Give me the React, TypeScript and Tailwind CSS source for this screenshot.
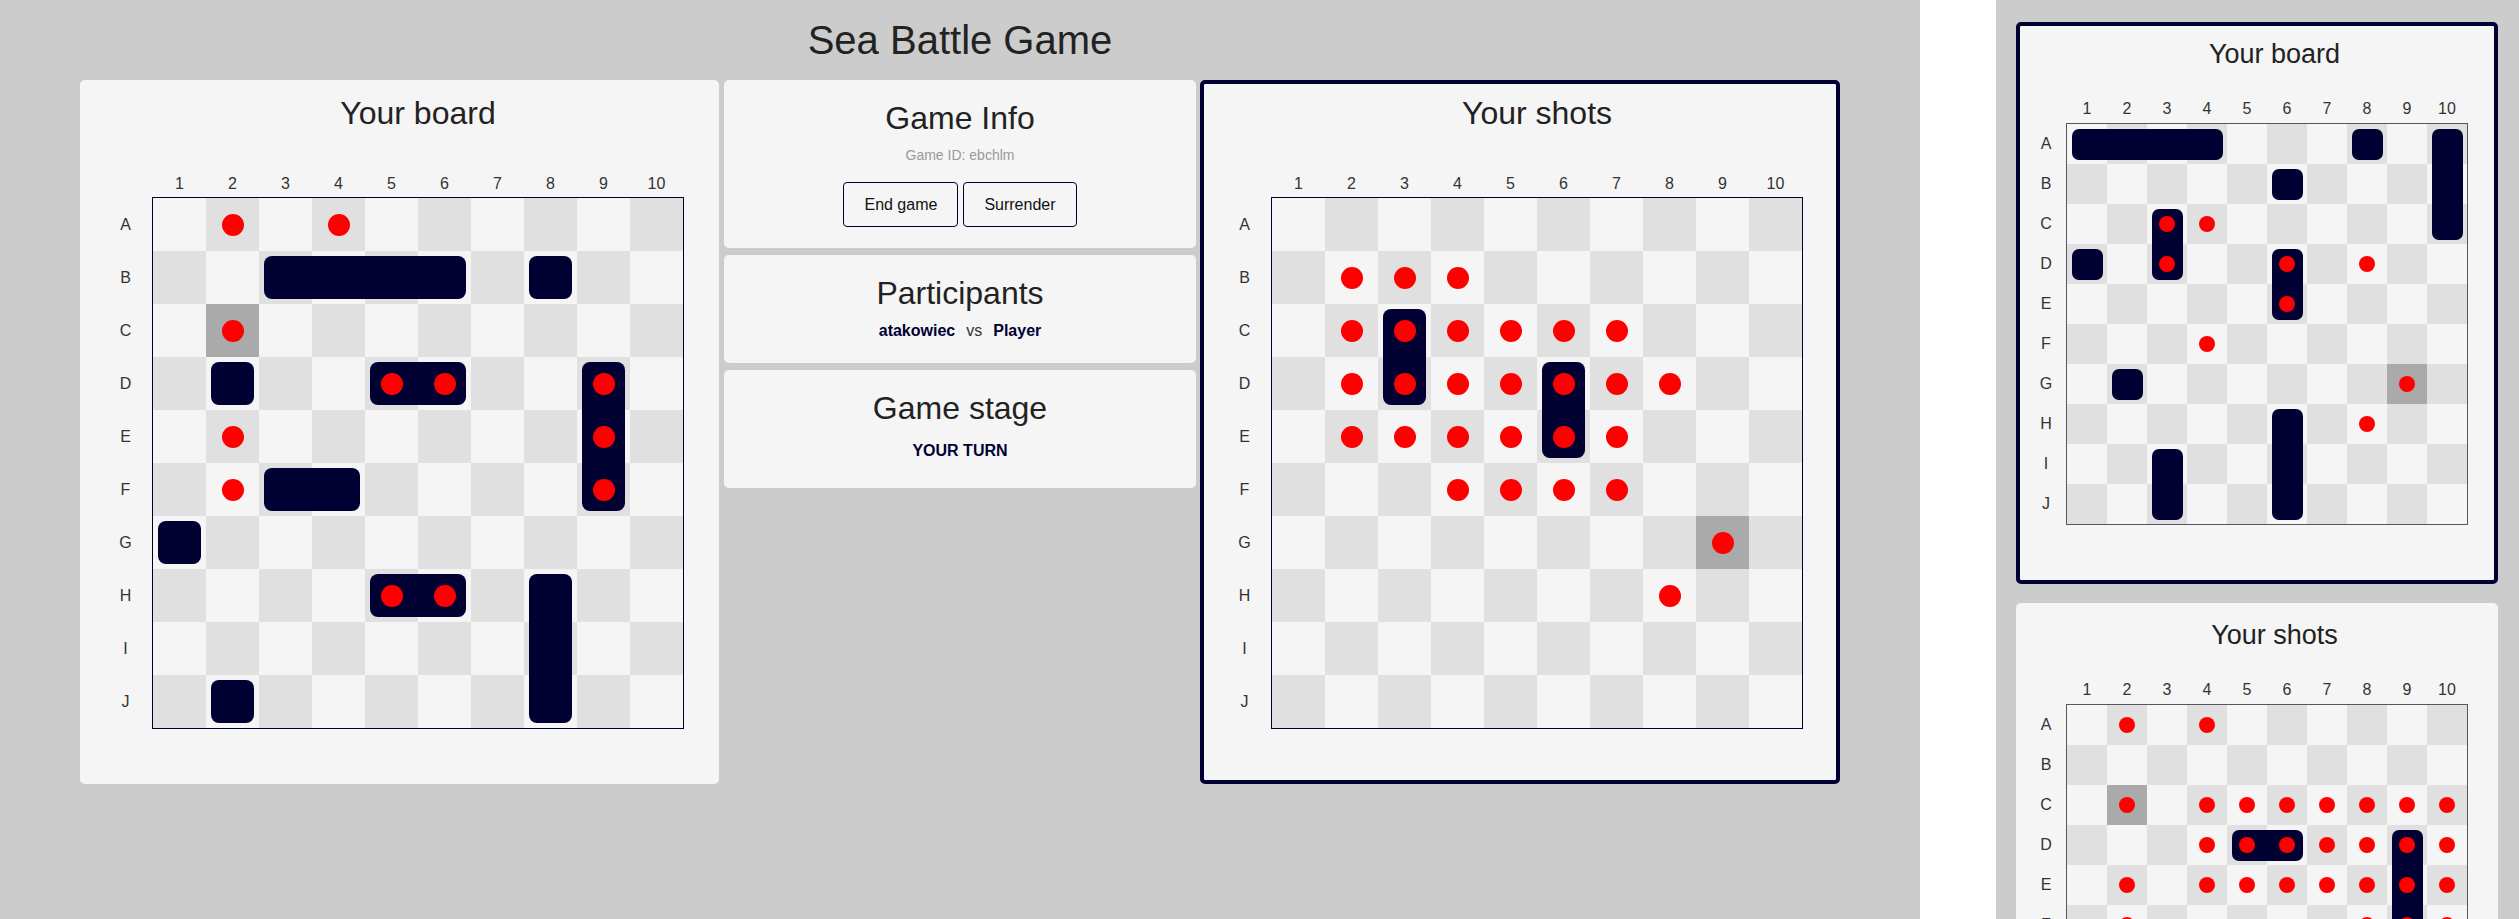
import React from "react";

type Ship = { r: number; c: number; len: number; dir: "h" | "v" };
type Board = { ships: Ship[]; hits: string[]; highlight: string[] };
type Size = "main" | "mobile";

const ROWS = "ABCDEFGHIJ".split("");
const COLS = [1, 2, 3, 4, 5, 6, 7, 8, 9, 10];

const key = (r: number, c: number) => ROWS[r] + (c + 1);

const mainBoard: Board = {
  ships: [
    { r: 1, c: 2, len: 4, dir: "h" },
    { r: 1, c: 7, len: 1, dir: "h" },
    { r: 3, c: 1, len: 1, dir: "h" },
    { r: 3, c: 4, len: 2, dir: "h" },
    { r: 3, c: 8, len: 3, dir: "v" },
    { r: 5, c: 2, len: 2, dir: "h" },
    { r: 6, c: 0, len: 1, dir: "h" },
    { r: 7, c: 4, len: 2, dir: "h" },
    { r: 7, c: 7, len: 3, dir: "v" },
    { r: 9, c: 1, len: 1, dir: "h" },
  ],
  hits: ["A2", "A4", "C2", "D5", "D6", "D9", "E2", "E9", "F2", "F9", "H5", "H6"],
  highlight: ["C2"],
};

const mainShots: Board = {
  ships: [
    { r: 2, c: 2, len: 2, dir: "v" },
    { r: 3, c: 5, len: 2, dir: "v" },
  ],
  hits: [
    "B2", "B3", "B4",
    "C2", "C3", "C4", "C5", "C6", "C7",
    "D2", "D3", "D4", "D5", "D6", "D7", "D8",
    "E2", "E3", "E4", "E5", "E6", "E7",
    "F4", "F5", "F6", "F7",
    "G9", "H8",
  ],
  highlight: ["G9"],
};

const mobileBoard: Board = {
  ships: [
    { r: 0, c: 0, len: 4, dir: "h" },
    { r: 0, c: 7, len: 1, dir: "h" },
    { r: 0, c: 9, len: 3, dir: "v" },
    { r: 1, c: 5, len: 1, dir: "h" },
    { r: 2, c: 2, len: 2, dir: "v" },
    { r: 3, c: 0, len: 1, dir: "h" },
    { r: 3, c: 5, len: 2, dir: "v" },
    { r: 6, c: 1, len: 1, dir: "h" },
    { r: 7, c: 5, len: 3, dir: "v" },
    { r: 8, c: 2, len: 2, dir: "v" },
  ],
  hits: ["C3", "C4", "D3", "D6", "D8", "E6", "F4", "G9", "H8"],
  highlight: ["G9"],
};

const mobileShots: Board = {
  ships: [
    { r: 3, c: 4, len: 2, dir: "h" },
    { r: 3, c: 8, len: 4, dir: "v" },
  ],
  hits: [
    "A2", "A4",
    "C2", "C4", "C5", "C6", "C7", "C8", "C9", "C10",
    "D4", "D5", "D6", "D7", "D8", "D9", "D10",
    "E2", "E4", "E5", "E6", "E7", "E8", "E9", "E10",
    "F2", "F8", "F9", "F10",
    "G9",
  ],
  highlight: ["C2"],
};

type Seg = { dir: "h" | "v"; start: boolean; end: boolean; single: boolean };

function segClass(size: Size, s: Seg): string {
  const m = size === "main";
  if (s.single) return m ? "m-[5px] rounded-[8px]" : "m-[4.5px] rounded-[7px]";
  if (s.dir === "h") {
    let c = m ? "my-[5px]" : "my-[4.5px]";
    if (s.start) c += m ? " ml-[5px] rounded-l-[8px]" : " ml-[4.5px] rounded-l-[7px]";
    if (s.end) c += m ? " mr-[5px] rounded-r-[8px]" : " mr-[4.5px] rounded-r-[7px]";
    return c;
  }
  let c = m ? "mx-[5px]" : "mx-[4.5px]";
  if (s.start) c += m ? " mt-[5px] rounded-t-[8px]" : " mt-[4.5px] rounded-t-[7px]";
  if (s.end) c += m ? " mb-[5px] rounded-b-[8px]" : " mb-[4.5px] rounded-b-[7px]";
  return c;
}

function BoardGrid({ data, size }: { data: Board; size: Size }) {
  const m = size === "main";
  const segs = new Map<string, Seg>();
  data.ships.forEach((s) => {
    for (let i = 0; i < s.len; i++) {
      const r = s.dir === "v" ? s.r + i : s.r;
      const c = s.dir === "h" ? s.c + i : s.c;
      segs.set(key(r, c), { dir: s.dir, start: i === 0, end: i === s.len - 1, single: s.len === 1 });
    }
  });
  const hits = new Set(data.hits);
  const hl = new Set(data.highlight);
  const cells: React.ReactNode[] = [];
  for (let r = 0; r < 10; r++) {
    for (let c = 0; c < 10; c++) {
      const k = key(r, c);
      const seg = segs.get(k);
      const bg = hl.has(k) ? "bg-[#aaaaaa]" : (r + c) % 2 === 1 ? "bg-[#e0e0e0]" : "bg-[#f5f5f5]";
      cells.push(
        <div
          key={k}
          className={`grid grid-cols-1 grid-rows-1 ${m ? "h-[53px] w-[53px]" : "h-[40px] w-[40px]"} ${bg}`}
        >
          {seg && <div className={`col-start-1 row-start-1 bg-[#000033] ${segClass(size, seg)}`} />}
          {hits.has(k) && (
            <div className="col-start-1 row-start-1 flex items-center justify-center">
              <div className={`${m ? "h-[22px] w-[22px]" : "h-[16px] w-[16px]"} rounded-full bg-[#ff0000]`} />
            </div>
          )}
        </div>
      );
    }
  }
  return (
    <div
      className={
        m
          ? "grid grid-cols-[repeat(10,53px)] border border-[#000033]"
          : "grid grid-cols-[repeat(10,40px)] border border-[#555566]"
      }
    >
      {cells}
    </div>
  );
}

function MainBoardCard({ title, data, active }: { title: string; data: Board; active?: boolean }) {
  return (
    <div
      className={`h-[704px] rounded-[5px] border-4 bg-[#f5f5f5] pt-[11px] ${
        active ? "border-[#000033] pl-[14px]" : "border-transparent pl-[15px]"
      }`}
    >
      <div className="flex">
        <div className="w-[53px] shrink-0" />
        <div className="w-[532px] text-center text-[32px] leading-[37px] text-[#222222]">{title}</div>
      </div>
      <div className="mt-[43px] flex">
        <div className="w-[53px] shrink-0" />
        <div className="flex pl-[1px]">
          {COLS.map((n) => (
            <div key={n} className="w-[53px] text-center text-[16px] leading-[18px] text-[#333333]">
              {n}
            </div>
          ))}
        </div>
      </div>
      <div className="mt-[4px] flex">
        <div className="flex w-[53px] shrink-0 flex-col pt-[1px]">
          {ROWS.map((r) => (
            <div key={r} className="flex h-[53px] items-center justify-center text-[16px] text-[#333333]">
              {r}
            </div>
          ))}
        </div>
        <BoardGrid data={data} size="main" />
      </div>
    </div>
  );
}

function MobileBoardCard({ title, data, active }: { title: string; data: Board; active?: boolean }) {
  return (
    <div
      className={`h-[562px] w-[482px] rounded-[5px] border-4 bg-[#f5f5f5] pl-[6px] pt-[13px] ${
        active ? "border-[#000033]" : "border-transparent"
      }`}
    >
      <div className="flex">
        <div className="w-[40px] shrink-0" />
        <div className="w-[417px] text-center text-[27px] leading-[31px] text-[#222222]">{title}</div>
      </div>
      <div className="mt-[30px] flex">
        <div className="w-[40px] shrink-0" />
        <div className="flex pl-[1px]">
          {COLS.map((n) => (
            <div key={n} className="w-[40px] text-center text-[16px] leading-[18px] text-[#333333]">
              {n}
            </div>
          ))}
        </div>
      </div>
      <div className="mt-[5px] flex">
        <div className="flex w-[40px] shrink-0 flex-col pt-[1px]">
          {ROWS.map((r) => (
            <div key={r} className="flex h-[40px] items-center justify-center text-[16px] text-[#333333]">
              {r}
            </div>
          ))}
        </div>
        <BoardGrid data={data} size="mobile" />
      </div>
    </div>
  );
}

function InfoCard({ children, className }: { children: React.ReactNode; className?: string }) {
  return (
    <div className={`rounded-[5px] bg-[#f5f5f5] pt-[20px] text-center ${className ?? ""}`}>{children}</div>
  );
}

function Heading({ children }: { children: React.ReactNode }) {
  return <div className="text-[32px] leading-[37px] text-[#222222]">{children}</div>;
}

export default function App() {
  return (
    <div className="flex h-[919px] w-[2519px] overflow-hidden font-['Liberation_Sans',Arial,sans-serif]">
      <div className="h-full w-[1920px] shrink-0 bg-[#cccccc]">
        <h1 className="pt-[17px] text-center text-[40px] leading-[46px] text-[#222222]">Sea Battle Game</h1>
        <div className="mt-[17px] flex pl-[80px]">
          <div className="w-[639px] shrink-0">
            <MainBoardCard title="Your board" data={mainBoard} />
          </div>
          <div className="ml-[5px] flex w-[472px] shrink-0 flex-col gap-[7px]">
            <InfoCard className="pb-[21px]">
              <Heading>Game Info</Heading>
              <div className="mt-[10px] text-[14px] leading-[16px] text-[#999999]">Game ID: ebchlm</div>
              <div className="mt-[19px] flex justify-center gap-[5px]">
                <button className="h-[45px] rounded-[4px] border border-[#000033] bg-transparent px-5 text-[16px] text-[#111111]">
                  End game
                </button>
                <button className="h-[45px] rounded-[4px] border border-[#000033] bg-transparent px-5 text-[16px] text-[#111111]">
                  Surrender
                </button>
              </div>
            </InfoCard>
            <InfoCard className="pb-[23px]">
              <Heading>Participants</Heading>
              <div className="mt-[10px] flex justify-center gap-[11px] text-[16px] leading-[18px]">
                <span className="font-bold text-[#000033]">atakowiec</span>
                <span className="text-[#333333]">vs</span>
                <span className="font-bold text-[#000033]">Player</span>
              </div>
            </InfoCard>
            <InfoCard className="pb-[23px]">
              <Heading>Game stage</Heading>
              <div className="mt-[10px] py-[5px] text-[16px] font-bold leading-[18px] text-[#000033]">YOUR TURN</div>
            </InfoCard>
          </div>
          <div className="ml-[4px] w-[640px] shrink-0">
            <MainBoardCard title="Your shots" data={mainShots} active />
          </div>
        </div>
      </div>
      <div className="h-full w-[76px] shrink-0 bg-white" />
      <div className="h-full flex-1 bg-[#cccccc] pl-[20px] pt-[22px]">
        <MobileBoardCard title="Your board" data={mobileBoard} active />
        <div className="mt-[19px]">
          <MobileBoardCard title="Your shots" data={mobileShots} />
        </div>
      </div>
    </div>
  );
}
